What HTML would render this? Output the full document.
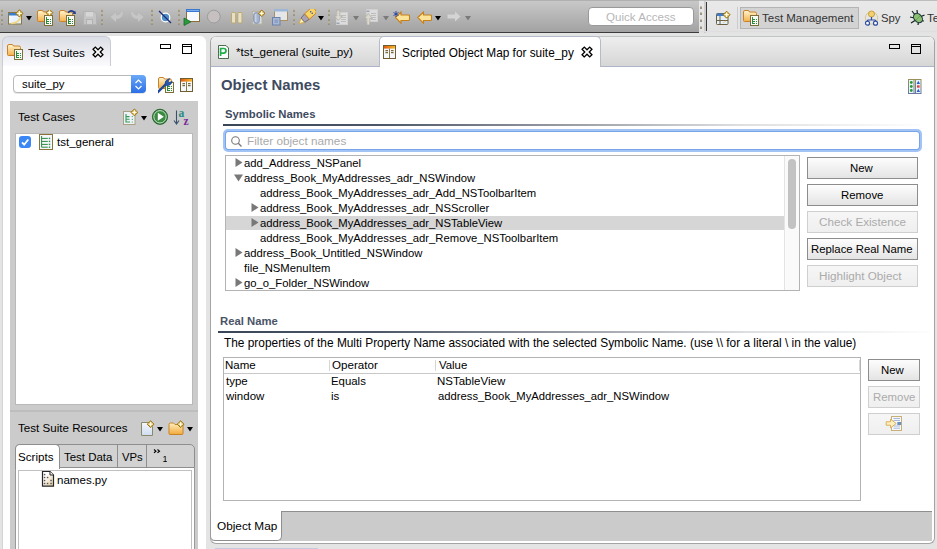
<!DOCTYPE html>
<html><head><meta charset="utf-8">
<style>
*{box-sizing:border-box;margin:0;padding:0}
html,body{width:937px;height:549px;overflow:hidden;background:#e4e4e4;font-family:"Liberation Sans",sans-serif;position:relative}
.a{position:absolute;display:block}
.t{position:absolute;white-space:nowrap;line-height:20px;font-family:"Liberation Sans",sans-serif}
</style></head><body>
<div class="a" style="left:0px;top:0px;width:699px;height:32px;background:linear-gradient(#c9c9c9,#a2a2a2);"></div>
<div class="a" style="left:0px;top:0px;width:699px;height:1px;background:#b0b0b0;"></div>
<div class="a" style="left:0px;top:32px;width:699px;height:1px;background:#3c3c3c;"></div>
<div class="a" style="left:699px;top:0px;width:238px;height:33px;background:linear-gradient(#e9e9e9,#e2e2e2);"></div>
<div class="a" style="left:699px;top:0px;width:238px;height:1px;background:#bdbdbd;"></div>
<div class="a" style="left:706px;top:2px;width:1px;height:30px;background:#383838;"></div>
<div class="a" style="left:704px;top:1px;width:2px;height:32px;background:#cdcdcd;"></div>
<div class="a" style="left:699px;top:31px;width:238px;height:1px;background:#dedede;"></div>
<div class="a" style="left:0px;top:33px;width:937px;height:516px;background:#e4e4e4;"></div>
<div class="a" style="left:1px;top:9px;width:2px;height:3px;background:linear-gradient(#c9c1a2,#857d66);border-radius:1px;"></div>
<div class="a" style="left:1px;top:13px;width:2px;height:3px;background:linear-gradient(#c9c1a2,#857d66);border-radius:1px;"></div>
<div class="a" style="left:1px;top:18px;width:2px;height:3px;background:linear-gradient(#c9c1a2,#857d66);border-radius:1px;"></div>
<div class="a" style="left:1px;top:22px;width:2px;height:3px;background:linear-gradient(#c9c1a2,#857d66);border-radius:1px;"></div>
<div class="a" style="left:101px;top:9px;width:2px;height:3px;background:linear-gradient(#c9c1a2,#857d66);border-radius:1px;"></div>
<div class="a" style="left:101px;top:13px;width:2px;height:3px;background:linear-gradient(#c9c1a2,#857d66);border-radius:1px;"></div>
<div class="a" style="left:101px;top:18px;width:2px;height:3px;background:linear-gradient(#c9c1a2,#857d66);border-radius:1px;"></div>
<div class="a" style="left:101px;top:22px;width:2px;height:3px;background:linear-gradient(#c9c1a2,#857d66);border-radius:1px;"></div>
<div class="a" style="left:151px;top:9px;width:2px;height:3px;background:linear-gradient(#c9c1a2,#857d66);border-radius:1px;"></div>
<div class="a" style="left:151px;top:13px;width:2px;height:3px;background:linear-gradient(#c9c1a2,#857d66);border-radius:1px;"></div>
<div class="a" style="left:151px;top:18px;width:2px;height:3px;background:linear-gradient(#c9c1a2,#857d66);border-radius:1px;"></div>
<div class="a" style="left:151px;top:22px;width:2px;height:3px;background:linear-gradient(#c9c1a2,#857d66);border-radius:1px;"></div>
<div class="a" style="left:178px;top:9px;width:2px;height:3px;background:linear-gradient(#c9c1a2,#857d66);border-radius:1px;"></div>
<div class="a" style="left:178px;top:13px;width:2px;height:3px;background:linear-gradient(#c9c1a2,#857d66);border-radius:1px;"></div>
<div class="a" style="left:178px;top:18px;width:2px;height:3px;background:linear-gradient(#c9c1a2,#857d66);border-radius:1px;"></div>
<div class="a" style="left:178px;top:22px;width:2px;height:3px;background:linear-gradient(#c9c1a2,#857d66);border-radius:1px;"></div>
<div class="a" style="left:293px;top:9px;width:2px;height:3px;background:linear-gradient(#c9c1a2,#857d66);border-radius:1px;"></div>
<div class="a" style="left:293px;top:13px;width:2px;height:3px;background:linear-gradient(#c9c1a2,#857d66);border-radius:1px;"></div>
<div class="a" style="left:293px;top:18px;width:2px;height:3px;background:linear-gradient(#c9c1a2,#857d66);border-radius:1px;"></div>
<div class="a" style="left:293px;top:22px;width:2px;height:3px;background:linear-gradient(#c9c1a2,#857d66);border-radius:1px;"></div>
<div class="a" style="left:328px;top:9px;width:2px;height:3px;background:linear-gradient(#c9c1a2,#857d66);border-radius:1px;"></div>
<div class="a" style="left:328px;top:13px;width:2px;height:3px;background:linear-gradient(#c9c1a2,#857d66);border-radius:1px;"></div>
<div class="a" style="left:328px;top:18px;width:2px;height:3px;background:linear-gradient(#c9c1a2,#857d66);border-radius:1px;"></div>
<div class="a" style="left:328px;top:22px;width:2px;height:3px;background:linear-gradient(#c9c1a2,#857d66);border-radius:1px;"></div>
<div class="a" style="left:700px;top:6px;width:2px;height:3px;background:linear-gradient(#c9c1a2,#6f6a58);border-radius:1px;"></div>
<div class="a" style="left:700px;top:12px;width:2px;height:3px;background:linear-gradient(#c9c1a2,#6f6a58);border-radius:1px;"></div>
<div class="a" style="left:700px;top:19px;width:2px;height:3px;background:linear-gradient(#c9c1a2,#6f6a58);border-radius:1px;"></div>
<div class="a" style="left:700px;top:26px;width:2px;height:3px;background:linear-gradient(#c9c1a2,#6f6a58);border-radius:1px;"></div>
<svg class="a" style="left:7px;top:9px" width="18" height="17" viewBox="0 0 18 17"><defs><linearGradient id="g1" x1="0" y1="0" x2="1" y2="1"><stop offset="0" stop-color="#f8fbff"/><stop offset="1" stop-color="#dcecff"/></linearGradient></defs><rect x="1.5" y="3.5" width="13" height="11.5" fill="url(#g1)" stroke="#8a7840"/><rect x="2" y="4" width="12" height="2.5" fill="#3a7ed2"/><path d="M4 14.5 Q12 14 13.5 8" stroke="#f2d47a" stroke-width="1.6" fill="none"/><path d="M12.4 0.8000000000000003 L16.0 4.4 L12.4 8.0 L8.8 4.4Z" fill="#d8b040" stroke="#9a7418" stroke-width="1"/><path d="M12.4 2.1000000000000005V6.7M10.100000000000001 4.4H14.7" stroke="#fffbe8" stroke-width="1.3" fill="none"/></svg>
<svg class="a" style="left:26px;top:16px" width="6" height="5" viewBox="0 0 6 5"><path d="M0 0H6L3 4.5Z" fill="#000"/></svg>
<svg class="a" style="left:37px;top:10px" width="18" height="18" viewBox="0 0 18 18"><defs><linearGradient id="g2" x1="0" y1="0" x2="0" y2="1"><stop offset="0" stop-color="#fff6d0"/><stop offset="1" stop-color="#f4b048"/></linearGradient></defs><path d="M0.5 2 Q0.5 0.5 2 0.5 H5 Q6 0.5 6.5 2 H12 Q13.5 2 13.5 3.5 V10.5 Q13.5 11.5 12.5 11.5 H1.5 Q0.5 11.5 0.5 10.5Z" fill="url(#g2)" stroke="#c8822a"/><rect x="7.5" y="5.5" width="8" height="10" fill="#fafaf4" stroke="#7e6e38"/><path d="M9.5 7V14M9 9.5H12M9 11.5H12M9 13.5H12" stroke="#2a8a40" stroke-width="1" fill="none"/><rect x="13" y="9" width="1" height="1" fill="#2a8a40"/><rect x="13" y="11" width="1" height="1" fill="#2a8a40"/><rect x="13" y="13" width="1" height="1" fill="#2a8a40"/><path d="M12.5 -0.6999999999999997 L15.9 2.7 L12.5 6.1 L9.1 2.7Z" fill="#d8b040" stroke="#9a7418" stroke-width="1"/><path d="M12.5 0.6000000000000003V4.8M10.4 2.7H14.6" stroke="#fffbe8" stroke-width="1.3" fill="none"/></svg>
<svg class="a" style="left:59px;top:10px" width="18" height="18" viewBox="0 0 18 18"><defs><linearGradient id="g3" x1="0" y1="0" x2="0" y2="1"><stop offset="0" stop-color="#fff6d0"/><stop offset="1" stop-color="#f4b048"/></linearGradient></defs><path d="M0.5 2 Q0.5 0.5 2 0.5 H5 Q6 0.5 6.5 2 H12 Q13.5 2 13.5 3.5 V10.5 Q13.5 11.5 12.5 11.5 H1.5 Q0.5 11.5 0.5 10.5Z" fill="url(#g3)" stroke="#c8822a"/><rect x="7.5" y="5.5" width="8" height="10" fill="#fafaf4" stroke="#7e6e38"/><path d="M9.5 7V14M9 9.5H12M9 11.5H12M9 13.5H12" stroke="#2a8a40" stroke-width="1" fill="none"/><rect x="13" y="9" width="1" height="1" fill="#2a8a40"/><rect x="13" y="11" width="1" height="1" fill="#2a8a40"/><rect x="13" y="13" width="1" height="1" fill="#2a8a40"/><path d="M9 2.8 Q12 -0.8 15.3 2.2" stroke="#1f3a8a" stroke-width="1.6" fill="none"/><path d="M17 4 L13.2 3.8 L16.2 0.8Z" fill="#1f3a8a"/></svg>
<svg class="a" style="left:83px;top:11px" width="14" height="14" viewBox="0 0 14 14"><path d="M0.5 0.5H11L13.5 3V13.5H0.5Z" fill="#c4c4c4" stroke="#b2b2b2"/><rect x="3" y="1" width="7" height="4.5" fill="#d6d6d6"/><rect x="3.5" y="8.5" width="6" height="5" fill="#d0d0d0" stroke="#b2b2b2"/></svg>
<svg class="a" style="left:110px;top:11px" width="14" height="12" viewBox="0 0 14 12"><path d="M13 1 Q13 8 6 8 V11 L0.5 6 L6 1.5 V4.5 Q10 4.5 11 1Z" fill="#c6c6c6"/></svg>
<svg class="a" style="left:130px;top:11px" width="14" height="12" viewBox="0 0 14 12"><path d="M1 1 Q1 8 8 8 V11 L13.5 6 L8 1.5 V4.5 Q4 4.5 3 1Z" fill="#c6c6c6"/></svg>
<svg class="a" style="left:158px;top:10px" width="14" height="14" viewBox="0 0 14 14"><circle cx="7.5" cy="7.5" r="4.3" fill="#4f8fc8" stroke="#fff" stroke-width="1.2"/><path d="M1 1 L13 13" stroke="#1a2c7a" stroke-width="1.2" fill="none"/></svg>
<svg class="a" style="left:183px;top:9px" width="18" height="17" viewBox="0 0 18 17"><rect x="3.5" y="1" width="13" height="11.5" fill="#f6faff" stroke="#8a7030"/><rect x="3" y="0" width="14" height="3" fill="#3a78d0"/><rect x="4" y="1" width="12" height="0.8" fill="#8ab8ee"/><path d="M1 9 L8 12.8 L1 16.5Z" fill="#2a9a3a" stroke="#1a6a28" stroke-width="0.8"/></svg>
<svg class="a" style="left:206px;top:9px" width="16" height="16" viewBox="0 0 16 16"><circle cx="7.8" cy="7.6" r="6.4" fill="#c6c0c0" stroke="#9c9c9c"/></svg>
<svg class="a" style="left:230px;top:11px" width="13" height="13" viewBox="0 0 13 13"><rect x="1.5" y="1.5" width="4.2" height="10.5" fill="#e6e0c8" stroke="#bea86a" rx="1"/><rect x="7.8" y="1.5" width="4.2" height="10.5" fill="#e6e0c8" stroke="#bea86a" rx="1"/></svg>
<svg class="a" style="left:251px;top:9px" width="16" height="16" viewBox="0 0 16 16"><rect x="1.5" y="2.5" width="9.5" height="12.5" fill="#d8dce4" stroke="#b8b4a0"/><rect x="2.5" y="3.5" width="6" height="11" rx="3" fill="#a4b2cc" stroke="#8090b0" stroke-width="0.8"/><rect x="4" y="5" width="1.5" height="8" fill="#c8d2e4"/><path d="M10.7 1.0 L14.0 4.3 L10.7 7.6 L7.3999999999999995 4.3Z" fill="#d8b040" stroke="#9a7418" stroke-width="1"/><path d="M10.7 2.3V6.3M8.7 4.3H12.7" stroke="#fffbe8" stroke-width="1.3" fill="none"/></svg>
<svg class="a" style="left:271px;top:9px" width="18" height="17" viewBox="0 0 18 17"><rect x="3.5" y="1" width="13" height="10.5" fill="#e4e6ea" stroke="#a89060"/><rect x="3" y="0" width="14" height="2.5" fill="#9cb6d8"/><rect x="1.5" y="8.5" width="7.5" height="7.5" fill="#a8b8d4" stroke="#6c82aa"/><rect x="3.5" y="10.5" width="3.5" height="3.5" fill="#8ea0c4"/></svg>
<svg class="a" style="left:298px;top:9px" width="18" height="16" viewBox="0 0 18 16"><g transform="translate(9 7.5) rotate(-42)"><path d="M-10.5 0 L-5.5 -2.8 L-5.5 2.8Z" fill="#fff6c0" stroke="#d8a838" stroke-width="0.8"/><path d="M-5.5 -2.8 L0 -3.6 L0 3.6 L-5.5 2.8Z" fill="#a8a2b2" stroke="#6a6270" stroke-width="0.8"/><path d="M0 -3.6 H8 Q10.8 -3.6 10.8 0 Q10.8 3.6 8 3.6 H0Z" fill="#f6d466" stroke="#d08224" stroke-width="0.9"/><circle cx="6" cy="-1.1" r="0.7" fill="#2848a8"/><circle cx="6" cy="1.1" r="0.7" fill="#2848a8"/></g></svg>
<svg class="a" style="left:318px;top:16px" width="6" height="5" viewBox="0 0 6 5"><path d="M0 0H6L3 4.5Z" fill="#000"/></svg>
<svg class="a" style="left:334px;top:9px" width="15" height="17" viewBox="0 0 15 17"><rect x="2.5" y="3.5" width="11" height="12" fill="#dcdcdc" stroke="#d0d0d0"/><path d="M7 6.5H12M7 8.5H12M7 10.5H12M7 12.5H12" stroke="#bdbdbd" fill="none"/><rect x="2.5" y="13.5" width="3" height="1.5" fill="#9aa4b4"/><path d="M2.8 1 H5.8 V7 H8.3 L4.3 11.5 L0.3 7 H2.8Z" fill="#dad8d0" stroke="#aaa89c" stroke-width="0.7"/></svg>
<svg class="a" style="left:353px;top:16px" width="6" height="5" viewBox="0 0 6 5"><path d="M0 0H6L3 4.5Z" fill="#7a7a7a"/></svg>
<svg class="a" style="left:364px;top:9px" width="15" height="17" viewBox="0 0 15 17"><rect x="2.5" y="0.5" width="11" height="12" fill="#dcdcdc" stroke="#d0d0d0"/><path d="M7 4.5H12M7 6.5H12M7 8.5H12M7 10.5H12" stroke="#bdbdbd" fill="none"/><rect x="2.5" y="1.5" width="3" height="1.5" fill="#9aa4b4"/><path d="M2.8 16 H5.8 V9.5 H8.3 L4.3 4.5 L0.3 9.5 H2.8Z" fill="#dad8d0" stroke="#aaa89c" stroke-width="0.7"/></svg>
<svg class="a" style="left:383px;top:16px" width="6" height="5" viewBox="0 0 6 5"><path d="M0 0H6L3 4.5Z" fill="#7a7a7a"/></svg>
<svg class="a" style="left:393px;top:11px" width="17" height="13" viewBox="0 0 17 13"><path d="M2.5 6.5 L8 1 V4 H15.5 Q16.5 4 16.5 5 V8.5 Q16.5 9.5 15.5 9.5 H8 V12.2Z" fill="#fbe49a" stroke="#c8801a" stroke-width="1.1"/><path d="M3 0 V6M0.5 1.5 L5.5 4.5M0.5 4.5 L5.5 1.5" stroke="#1f3f9f" stroke-width="0.9" fill="none"/></svg>
<svg class="a" style="left:417px;top:11px" width="15" height="13" viewBox="0 0 15 13"><path d="M0.8 6.5 L6.5 1 V4 H13.5 Q14.5 4 14.5 5 V8.5 Q14.5 9.5 13.5 9.5 H6.5 V12.2Z" fill="#fbe49a" stroke="#c8801a" stroke-width="1.1"/></svg>
<svg class="a" style="left:435px;top:16px" width="6" height="5" viewBox="0 0 6 5"><path d="M0 0H6L3 4.5Z" fill="#000"/></svg>
<svg class="a" style="left:447px;top:11px" width="14" height="12" viewBox="0 0 14 12"><path d="M13.5 5.5 L8 0.5 V3.5 H0.5 V7.5 H8 V10.5Z" fill="#d4d4d4"/></svg>
<svg class="a" style="left:465px;top:16px" width="6" height="5" viewBox="0 0 6 5"><path d="M0 0H6L3 4.5Z" fill="#7a7a7a"/></svg>
<div class="a" style="left:588px;top:7px;width:106px;height:19px;background:#fff;border:1px solid #999;border-radius:4px;"></div>
<svg class="a" style="left:715px;top:10px" width="16" height="16" viewBox="0 0 16 16"><rect x="1.5" y="3.5" width="11.5" height="11" rx="0.8" fill="#e2f0fc" stroke="#6e6040"/><rect x="2" y="3.5" width="10.5" height="2.5" fill="#3b7bd0"/><path d="M5 6V14.5M1.5 10.5H13" stroke="#6e6040" fill="none"/><path d="M8 13 L11 11" stroke="#e8c870" stroke-width="0.8"/><path d="M11.6 1.2000000000000002 L15.1 4.7 L11.6 8.2 L8.1 4.7Z" fill="#d8b040" stroke="#9a7418" stroke-width="1"/><path d="M11.6 2.5V6.8999999999999995M9.4 4.7H13.799999999999999" stroke="#fffbe8" stroke-width="1.3" fill="none"/></svg>
<div class="a" style="left:737px;top:7px;width:1px;height:22px;background:#cbcbcb;"></div>
<div class="a" style="left:740px;top:7px;width:119px;height:22px;background:#d3d3d3;border:1px solid #b4b4b4;"></div>
<svg class="a" style="left:743px;top:10px" width="18" height="18" viewBox="0 0 18 18"><defs><linearGradient id="g4" x1="0" y1="0" x2="0" y2="1"><stop offset="0" stop-color="#fff6d0"/><stop offset="1" stop-color="#f4b048"/></linearGradient></defs><path d="M0.5 2 Q0.5 0.5 2 0.5 H5 Q6 0.5 6.5 2 H12 Q13.5 2 13.5 3.5 V10.5 Q13.5 11.5 12.5 11.5 H1.5 Q0.5 11.5 0.5 10.5Z" fill="url(#g4)" stroke="#c8822a"/><rect x="7.5" y="5.5" width="8" height="10" fill="#fafaf4" stroke="#7e6e38"/><path d="M9.5 7V14M9 9.5H12M9 11.5H12M9 13.5H12" stroke="#2a8a40" stroke-width="1" fill="none"/><rect x="13" y="9" width="1" height="1" fill="#2a8a40"/><rect x="13" y="11" width="1" height="1" fill="#2a8a40"/><rect x="13" y="13" width="1" height="1" fill="#2a8a40"/></svg>
<svg class="a" style="left:864px;top:10px" width="15" height="16" viewBox="0 0 15 16"><circle cx="7.5" cy="8" r="6.2" fill="none" stroke="#d8c890" stroke-width="1"/><circle cx="7.5" cy="4" r="3" fill="#f3d070" stroke="#c8a040"/><path d="M7.5 7V10M3.5 10H11.5M3.5 10V12M11.5 10V12" stroke="#2f4fa0" stroke-width="1.2" fill="none"/><circle cx="3.5" cy="13.2" r="2" fill="#fff" stroke="#2f4fa0" stroke-width="1.2"/><circle cx="11.5" cy="13.2" r="2" fill="#fff" stroke="#2f4fa0" stroke-width="1.2"/></svg>
<svg class="a" style="left:909px;top:9px" width="17" height="17" viewBox="0 0 17 17"><path d="M3 2 L6.5 6.5 M1 8 L5.5 9 M2 14 L6 11.5 M8 1 L8.5 5.5 M15.5 6 L11 8 M15 12 L11 11.5 M9 16 L9.5 12.5" stroke="#10201a" stroke-width="1.2" fill="none"/><ellipse cx="9" cy="9" rx="3.8" ry="5.2" transform="rotate(-40 9 9)" fill="#8cc070" stroke="#1e3a40" stroke-width="1.1"/><path d="M7 11 L11 7" stroke="#5a9a50" stroke-width="0.8"/></svg>
<div class="a" style="left:2px;top:36px;width:204px;height:513px;background:#fff;border-left:1px solid #d4d4d4;border-radius:6px 6px 0 0;"></div>
<div class="a" style="left:2px;top:36px;width:109px;height:30px;background:linear-gradient(#dcdee6,#fbfbfd);border:1px solid #c9ccd6;border-bottom:none;border-radius:6px 6px 0 0;"></div>
<svg class="a" style="left:7px;top:44px" width="18" height="18" viewBox="0 0 18 18"><defs><linearGradient id="g5" x1="0" y1="0" x2="0" y2="1"><stop offset="0" stop-color="#fff6d0"/><stop offset="1" stop-color="#f4b048"/></linearGradient></defs><path d="M0.5 2 Q0.5 0.5 2 0.5 H5 Q6 0.5 6.5 2 H12 Q13.5 2 13.5 3.5 V10.5 Q13.5 11.5 12.5 11.5 H1.5 Q0.5 11.5 0.5 10.5Z" fill="url(#g5)" stroke="#c8822a"/><rect x="7.5" y="5.5" width="8" height="10" fill="#fafaf4" stroke="#7e6e38"/><path d="M9.5 7V14M9 9.5H12M9 11.5H12M9 13.5H12" stroke="#2a8a40" stroke-width="1" fill="none"/><rect x="13" y="9" width="1" height="1" fill="#2a8a40"/><rect x="13" y="11" width="1" height="1" fill="#2a8a40"/><rect x="13" y="13" width="1" height="1" fill="#2a8a40"/></svg>
<svg class="a" style="left:92px;top:46px" width="12" height="12" viewBox="0 0 12 12"><path d="M3.31 10.95 L1.05 8.69 L3.74 6.00 L1.05 3.31 L3.31 1.05 L6.00 3.74 L8.69 1.05 L10.95 3.31 L8.26 6.00 L10.95 8.69 L8.69 10.95 L6.00 8.26Z" fill="#fff" stroke="#000" stroke-width="1.3" stroke-linejoin="miter"/></svg>
<div class="a" style="left:160px;top:44px;width:11px;height:5px;border:1.3px solid #000;"></div>
<div class="a" style="left:182px;top:44px;width:10px;height:10px;border:1.3px solid #000;"></div>
<div class="a" style="left:183px;top:46px;width:8px;height:1px;background:#000;"></div>
<div class="a" style="left:13px;top:75px;width:133px;height:18px;background:#fff;border:1px solid #b8b8b8;border-radius:4px;box-shadow:0 1px 0 #e6e6e6;"></div>
<div class="a" style="left:131px;top:75px;width:15px;height:18px;background:linear-gradient(#6aa9f8,#2c6fe6);border-radius:0 4px 4px 0;"></div>
<svg class="a" style="left:134px;top:78px" width="9" height="13" viewBox="0 0 9 13"><path d="M1.5 5 L4.5 2 L7.5 5 M1.5 8 L4.5 11 L7.5 8" stroke="#fff" stroke-width="1.2" fill="none"/></svg>
<svg class="a" style="left:158px;top:77px" width="18" height="18" viewBox="0 0 18 18"><defs><linearGradient id="g6" x1="0" y1="0" x2="0" y2="1"><stop offset="0" stop-color="#fff6d0"/><stop offset="1" stop-color="#f4b048"/></linearGradient></defs><path d="M0.5 2 Q0.5 0.5 2 0.5 H5 Q6 0.5 6.5 2 H12 Q13.5 2 13.5 3.5 V10.5 Q13.5 11.5 12.5 11.5 H1.5 Q0.5 11.5 0.5 10.5Z" fill="url(#g6)" stroke="#c8822a"/><rect x="7.5" y="5.5" width="8" height="10" fill="#fafaf4" stroke="#7e6e38"/><path d="M9.5 7V14M9 9.5H12M9 11.5H12M9 13.5H12" stroke="#2a8a40" stroke-width="1" fill="none"/><rect x="13" y="9" width="1" height="1" fill="#2a8a40"/><rect x="13" y="11" width="1" height="1" fill="#2a8a40"/><rect x="13" y="13" width="1" height="1" fill="#2a8a40"/><path d="M-0.2 15.2 L8.5 6.5" stroke="#1f4a9a" stroke-width="2.4" stroke-linecap="round" fill="none"/><path d="M7 8 Q6.5 3.5 10 2.2 L11.8 1.6 L10.2 4.2 L11.5 5.5 L14.2 4.2 Q13.8 8 9.5 8.8Z" fill="#2a5ab0" stroke="#1a3a80" stroke-width="0.6"/></svg>
<svg class="a" style="left:180px;top:78px" width="14" height="15" viewBox="0 0 14 15"><defs><linearGradient id="tg2" x1="0" x2="1"><stop offset="0" stop-color="#e05a10"/><stop offset="1" stop-color="#f8b828"/></linearGradient></defs><rect x="0.5" y="0.5" width="12" height="13" fill="#f4f8fc" stroke="#6e5e30"/><rect x="1" y="1" width="11" height="2.6" fill="url(#tg2)"/><path d="M6.5 3.6V13.2" stroke="#8a7a40" fill="none"/><path d="M2.4 5.6H5M2.4 7.6H5M8 5.6H10.6M8 7.6H10.6" stroke="#7a6a40" stroke-width="1.1" fill="none"/></svg>
<div class="a" style="left:10px;top:101px;width:188px;height:309px;background:#cbcbcb;"></div>
<svg class="a" style="left:122px;top:108px" width="16" height="18" viewBox="0 0 16 18"><rect x="1.5" y="3.5" width="11.5" height="13" fill="#eef2f6" stroke="#a8a080"/><path d="M4 6V14H8M4 8.6H7.5M4 11.3H7.5" stroke="#2f9a5a" stroke-width="1.1" fill="none"/><circle cx="10.3" cy="8.6" r="0.6" fill="#2f9a5a"/><circle cx="10.3" cy="11.3" r="0.6" fill="#2f9a5a"/><circle cx="10.3" cy="14" r="0.6" fill="#2f9a5a"/><path d="M12.4 1.0000000000000004 L15.8 4.4 L12.4 7.800000000000001 L9.0 4.4Z" fill="#d8b040" stroke="#9a7418" stroke-width="1"/><path d="M12.4 2.3000000000000007V6.500000000000001M10.3 4.4H14.5" stroke="#fffbe8" stroke-width="1.3" fill="none"/></svg>
<svg class="a" style="left:141px;top:116px" width="6" height="5" viewBox="0 0 6 5"><path d="M0 0H6L3 4.5Z" fill="#000"/></svg>
<svg class="a" style="left:151px;top:108px" width="18" height="18" viewBox="0 0 18 18"><circle cx="9" cy="8.8" r="7.6" fill="#2c7a34" stroke="#1e5a24" stroke-width="0.8"/><circle cx="9" cy="8.8" r="6.2" fill="#3a8a40" stroke="#d8ecd8" stroke-width="0.9"/><path d="M6.8 4.8 L12.8 8.8 L6.8 12.8Z" fill="#fff"/></svg>
<svg class="a" style="left:173px;top:108px" width="18" height="18" viewBox="0 0 18 18"><path d="M3.5 2.5V15M1 12.5 L3.5 16 L6 12.5" stroke="#3a5070" stroke-width="1.1" fill="none"/><text x="5.5" y="9" font-family="Liberation Serif" font-weight="bold" font-size="11.5" fill="#2a8a80">a</text><text x="10.5" y="17" font-family="Liberation Serif" font-weight="bold" font-size="11.5" fill="#7a2a9a">z</text></svg>
<div class="a" style="left:15px;top:133px;width:178px;height:272px;background:#fff;border:1px solid #b9b9b9;"></div>
<div class="a" style="left:19px;top:136px;width:12px;height:12px;background:#3b86f7;border-radius:3px;"></div>
<svg class="a" style="left:19px;top:136px" width="12" height="12" viewBox="0 0 12 12"><path d="M3 6.3 L5.2 8.6 L9.3 3.5" stroke="#fff" stroke-width="1.8" fill="none"/></svg>
<svg class="a" style="left:39px;top:134px" width="14" height="16" viewBox="0 0 14 16"><rect x="0.5" y="0.5" width="13" height="15" fill="#f4f7fb" stroke="#8a7238"/><path d="M2.6 2V13.2M2.6 4.4H8.8M2.6 7.4H8.8M2.6 10.4H8.8M2.6 13.2H8.8" stroke="#2a8a40" stroke-width="1" fill="none"/><rect x="9.8" y="3.7" width="1.4" height="1.4" fill="#2a8a40"/><rect x="9.8" y="6.7" width="1.4" height="1.4" fill="#2a8a40"/><rect x="9.8" y="9.700000000000001" width="1.4" height="1.4" fill="#2a8a40"/><rect x="9.8" y="12.5" width="1.4" height="1.4" fill="#2a8a40"/></svg>
<div class="a" style="left:10px;top:410px;width:188px;height:2px;background:#bdbdbd;"></div>
<div class="a" style="left:10px;top:412px;width:188px;height:137px;background:#cbcbcb;"></div>
<svg class="a" style="left:140px;top:420px" width="16" height="17" viewBox="0 0 16 17"><defs><linearGradient id="nf" x1="0" y1="0" x2="0" y2="1"><stop offset="0" stop-color="#f4f8fe"/><stop offset="1" stop-color="#cfdcf0"/></linearGradient></defs><path d="M1.5 2.5 H8.5 L12.5 6.5 V15.5 H1.5Z" fill="url(#nf)" stroke="#8a8a6a"/><path d="M10.6 0.8000000000000003 L14.0 4.2 L10.6 7.6 L7.199999999999999 4.2Z" fill="#d8b040" stroke="#9a7418" stroke-width="1"/><path d="M10.6 2.1000000000000005V6.3M8.5 4.2H12.7" stroke="#fffbe8" stroke-width="1.3" fill="none"/></svg>
<svg class="a" style="left:157px;top:427px" width="6" height="5" viewBox="0 0 6 5"><path d="M0 0H6L3 4.5Z" fill="#000"/></svg>
<svg class="a" style="left:168px;top:420px" width="17" height="16" viewBox="0 0 17 16"><defs><linearGradient id="nfd" x1="0" y1="0" x2="0" y2="1"><stop offset="0" stop-color="#fff0c0"/><stop offset="1" stop-color="#f2a838"/></linearGradient></defs><path d="M1 4.5 Q1 3 2.5 3 H5.5 L7 4.5 H14 Q15 4.5 15 5.5 V13.5 Q15 14.5 14 14.5 H2 Q1 14.5 1 13.5Z" fill="url(#nfd)" stroke="#c8822a"/><path d="M12.6 0.8000000000000003 L16.0 4.2 L12.6 7.6 L9.2 4.2Z" fill="#d8b040" stroke="#9a7418" stroke-width="1"/><path d="M12.6 2.1000000000000005V6.3M10.5 4.2H14.7" stroke="#fffbe8" stroke-width="1.3" fill="none"/></svg>
<svg class="a" style="left:187px;top:427px" width="6" height="5" viewBox="0 0 6 5"><path d="M0 0H6L3 4.5Z" fill="#000"/></svg>
<div class="a" style="left:15px;top:444px;width:180px;height:24px;background:#d2d2d2;border:1px solid #8e8e8e;border-radius:5px 5px 0 0;"></div>
<div class="a" style="left:117px;top:445px;width:1px;height:23px;background:#8e8e8e;"></div>
<div class="a" style="left:146px;top:445px;width:1px;height:23px;background:#8e8e8e;"></div>
<div class="a" style="left:15px;top:468px;width:180px;height:81px;background:#fff;border-left:1px solid #9a9a9a;border-right:1px solid #9a9a9a;"></div>
<div class="a" style="left:15px;top:444px;width:45px;height:25px;background:#fff;border:1px solid #8e8e8e;border-bottom:none;border-radius:5px 5px 0 0;"></div>
<svg class="a" style="left:153px;top:449px" width="14" height="13" viewBox="0 0 14 13"><path d="M1 0.5 L3 2.2 L1 3.8 M4.5 0.5 L6.5 2.2 L4.5 3.8" stroke="#000" stroke-width="1.1" fill="none"/><text x="9.5" y="12.5" font-family="Liberation Sans" font-size="9" fill="#000">1</text></svg>
<div class="a" style="left:18px;top:470px;width:174px;height:79px;background:#fff;border:1px solid #c0c0c0;border-bottom:none;"></div>
<svg class="a" style="left:41px;top:470px" width="15" height="18" viewBox="0 0 15 18"><defs><linearGradient id="np" x1="0" y1="0" x2="1" y2="1"><stop offset="0.3" stop-color="#ffffff"/><stop offset="1" stop-color="#e2c89a"/></linearGradient></defs><path d="M1.5 1.5 H9 L12.5 5 V16.2 H1.5Z" fill="url(#np)" stroke="#262626" stroke-width="1.2"/><path d="M9 1.5 V5 H12.5" fill="#fff" stroke="#262626" stroke-width="1"/><rect x="2.8" y="3.8999999999999995" width="1.5" height="1.4" fill="#555"/><rect x="2.8" y="6.8" width="1.5" height="1.4" fill="#555"/><rect x="5.8" y="6.8" width="1.5" height="1.4" fill="#555"/><rect x="2.8" y="9.8" width="1.5" height="1.4" fill="#555"/><rect x="9.3" y="9.8" width="1.5" height="1.4" fill="#555"/><rect x="2.8" y="12.8" width="1.5" height="1.4" fill="#555"/><rect x="5.8" y="12.8" width="1.5" height="1.4" fill="#555"/><rect x="9.3" y="12.8" width="1.5" height="1.4" fill="#555"/></svg>
<div class="a" style="left:210px;top:36px;width:725px;height:508px;background:#fff;border:1px solid #a4a4a4;border-top-color:#c2c6c2;border-radius:6px;"></div>
<div class="a" style="left:211px;top:37px;width:723px;height:29px;background:linear-gradient(#eeeeee,#d6d6d6);border-radius:5px 5px 0 0;"></div>
<div class="a" style="left:211px;top:66px;width:723px;height:1px;background:#aeb4c8;"></div>
<svg class="a" style="left:218px;top:45px" width="12" height="14" viewBox="0 0 12 14"><path d="M0.5 0.5 H8 L10.5 3 V13.5 H0.5Z" fill="#fbfbff" stroke="#4f6a30" stroke-width="1"/><path d="M0.5 0.5 H8 L10.5 3 V13.5 H0.5Z" fill="none" stroke="#4a7ac0" stroke-width="1" stroke-dasharray="0.6 2.4"/><path d="M2.6 11 V3.5 H5.6 Q8 3.5 8 5.8 Q8 8.1 5.6 8.1 H2.6" fill="none" stroke="#1fae48" stroke-width="1.7"/></svg>
<div class="a" style="left:379px;top:36px;width:222px;height:31px;background:#fff;border:1px solid #b4bccc;border-bottom:none;border-radius:5px 5px 0 0;"></div>
<svg class="a" style="left:383px;top:45px" width="14" height="14" viewBox="0 0 14 14"><defs><linearGradient id="tg1" x1="0" x2="1"><stop offset="0" stop-color="#e05a10"/><stop offset="1" stop-color="#f8b828"/></linearGradient></defs><rect x="0.5" y="0.5" width="12" height="13" fill="#f4f8fc" stroke="#6e5e30"/><rect x="1" y="1" width="11" height="2.6" fill="url(#tg1)"/><path d="M6.5 3.6V13.2" stroke="#8a7a40" fill="none"/><path d="M2.4 5.6H5M2.4 7.6H5M8 5.6H10.6M8 7.6H10.6" stroke="#7a6a40" stroke-width="1.1" fill="none"/></svg>
<svg class="a" style="left:581px;top:46px" width="12" height="12" viewBox="0 0 12 12"><path d="M3.31 10.95 L1.05 8.69 L3.74 6.00 L1.05 3.31 L3.31 1.05 L6.00 3.74 L8.69 1.05 L10.95 3.31 L8.26 6.00 L10.95 8.69 L8.69 10.95 L6.00 8.26Z" fill="#fff" stroke="#000" stroke-width="1.3" stroke-linejoin="miter"/></svg>
<div class="a" style="left:889px;top:44px;width:11px;height:5px;border:1.3px solid #000;"></div>
<div class="a" style="left:911px;top:44px;width:10px;height:10px;border:1.3px solid #000;"></div>
<div class="a" style="left:912px;top:46px;width:8px;height:1px;background:#000;"></div>
<svg class="a" style="left:908px;top:79px" width="14" height="15" viewBox="0 0 14 15"><defs><linearGradient id="on" x1="0" y1="0" x2="0" y2="1"><stop offset="0" stop-color="#9a9058"/><stop offset="1" stop-color="#6a78a0"/></linearGradient></defs><rect x="0.5" y="0.5" width="12.5" height="14" fill="#e8f6fc" stroke="url(#on)"/><path d="M6 0.5V14.5M7.5 0.5V14.5" stroke="url(#on)" fill="none"/><circle cx="3.3" cy="3.5" r="1.4" fill="#2a9a3a"/><circle cx="3.3" cy="7.5" r="1.4" fill="#2a9a3a"/><circle cx="3.3" cy="11.5" r="1.4" fill="#2a9a3a"/><path d="M10.3 1.8 L12 5 H8.6Z" fill="#2a5ad0"/><rect x="9" y="6.3" width="2.6" height="2.4" fill="#e04040"/><path d="M10.3 9.8 L12 13 H8.6Z" fill="#2a5ad0"/></svg>
<div class="a" style="left:223px;top:124px;width:697px;height:2px;background:linear-gradient(90deg,#3a4658 0%,#4c5666 22%,#9a9ea6 50%,#dcdee0 74%,#fdfdfd 100%);"></div>
<div class="a" style="left:223px;top:129px;width:699px;height:23px;border:3px solid #a2c3f5;border-radius:5px;background:#fff;"></div>
<div class="a" style="left:225px;top:131px;width:695px;height:19px;border:1px solid #78a4e8;border-radius:3px;"></div>
<svg class="a" style="left:231px;top:136px" width="12" height="11" viewBox="0 0 12 11"><circle cx="4.5" cy="4.5" r="3.8" fill="none" stroke="#777" stroke-width="1.1"/><path d="M7.3 7.3 L10.5 10.5" stroke="#777" stroke-width="1.3" fill="none"/></svg>
<div class="a" style="left:225px;top:155px;width:575px;height:136px;background:#fff;border:1px solid #b3b3b3;"></div>
<div class="a" style="left:784px;top:156px;width:1px;height:134px;background:#e4e4e4;"></div>
<div class="a" style="left:785px;top:156px;width:14px;height:134px;background:#fafafa;"></div>
<div class="a" style="left:788px;top:159px;width:8px;height:70px;background:#c2c2c2;border-radius:4px;"></div>
<div class="a" style="left:226px;top:216px;width:558px;height:14px;background:#d6d6d6;"></div>
<svg class="a" style="left:235px;top:158px" width="8" height="9" viewBox="0 0 8 9"><path d="M0.5 0 L7.5 4.5 L0.5 9Z" fill="#787878"/></svg>
<svg class="a" style="left:234px;top:174px" width="9" height="8" viewBox="0 0 9 8"><path d="M0 0.5 H9 L4.5 7.5Z" fill="#787878"/></svg>
<svg class="a" style="left:251px;top:203px" width="8" height="9" viewBox="0 0 8 9"><path d="M0.5 0 L7.5 4.5 L0.5 9Z" fill="#787878"/></svg>
<svg class="a" style="left:251px;top:218px" width="8" height="9" viewBox="0 0 8 9"><path d="M0.5 0 L7.5 4.5 L0.5 9Z" fill="#787878"/></svg>
<svg class="a" style="left:235px;top:248px" width="8" height="9" viewBox="0 0 8 9"><path d="M0.5 0 L7.5 4.5 L0.5 9Z" fill="#787878"/></svg>
<svg class="a" style="left:235px;top:278px" width="8" height="9" viewBox="0 0 8 9"><path d="M0.5 0 L7.5 4.5 L0.5 9Z" fill="#787878"/></svg>
<div class="a" style="left:807px;top:157px;width:111px;height:22px;background:linear-gradient(#fdfdfd,#e4e4e4);border:1px solid #8d8d8d;"></div>
<div class="a" style="left:807px;top:184px;width:111px;height:22px;background:linear-gradient(#fdfdfd,#e4e4e4);border:1px solid #8d8d8d;"></div>
<div class="a" style="left:807px;top:211px;width:111px;height:22px;background:linear-gradient(#f6f6f6,#efefef);border:1px solid #cfcfcf;"></div>
<div class="a" style="left:807px;top:238px;width:111px;height:22px;background:linear-gradient(#fdfdfd,#e4e4e4);border:1px solid #8d8d8d;"></div>
<div class="a" style="left:807px;top:265px;width:111px;height:22px;background:linear-gradient(#f6f6f6,#efefef);border:1px solid #cfcfcf;"></div>
<div class="a" style="left:218px;top:331px;width:712px;height:2px;background:linear-gradient(90deg,#3a4658 0%,#4c5666 22%,#9a9ea6 50%,#dcdee0 74%,#fdfdfd 100%);"></div>
<div class="a" style="left:223px;top:357px;width:638px;height:144px;background:#fff;border:1px solid #b3b3b3;"></div>
<div class="a" style="left:224px;top:373px;width:636px;height:1px;background:#c8c8c8;"></div>
<div class="a" style="left:329px;top:360px;width:1px;height:11px;background:#d6d6d6;"></div>
<div class="a" style="left:435px;top:360px;width:1px;height:11px;background:#d6d6d6;"></div>
<div class="a" style="left:859px;top:360px;width:1px;height:11px;background:#d6d6d6;"></div>
<div class="a" style="left:868px;top:359px;width:52px;height:22px;background:linear-gradient(#fdfdfd,#e4e4e4);border:1px solid #8d8d8d;"></div>
<div class="a" style="left:868px;top:386px;width:52px;height:22px;background:linear-gradient(#f6f6f6,#efefef);border:1px solid #cfcfcf;"></div>
<div class="a" style="left:868px;top:413px;width:52px;height:22px;background:linear-gradient(#f6f6f6,#efefef);border:1px solid #cfcfcf;"></div>
<svg class="a" style="left:885px;top:415px" width="18" height="17" viewBox="0 0 18 17"><rect x="6.5" y="1.5" width="10" height="14" fill="#f4f8fc" stroke="#c8b078"/><path d="M8.5 3.5H15M8.5 5.5H15M8.5 11H15M8.5 13.2H15" stroke="#a8b8d8" fill="none"/><rect x="12.3" y="7" width="3.8" height="3" fill="#6a90c0"/><path d="M1.2 6.8 H5.5 V4.2 L11.2 8.5 L5.5 12.8 V10.2 H1.2Z" fill="#fcf0c0" stroke="#d8a850" stroke-width="0.9"/></svg>
<div class="a" style="left:211px;top:511px;width:721px;height:30px;background:#cbcbcb;border-top:1px solid #8e8e8e;"></div>
<div class="a" style="left:210px;top:511px;width:72px;height:30px;background:#fff;border-left:1px solid #9c9c9c;border-right:1px solid #8e8e8e;border-bottom:1px solid #8e8e8e;border-radius:0 0 5px 5px;"></div>
<div class="a" style="left:215px;top:548px;width:103px;height:1px;background:#c6c9de;"></div>
<div class="t" style="left:606px;top:7px;font-size:11.6px;color:#b6b6b6;">Quick Access</div>
<div class="t" style="left:762px;top:8px;font-size:11.5px;color:#333;">Test Management</div>
<div class="t" style="left:881px;top:8px;font-size:11.3px;color:#333;">Spy</div>
<div class="t" style="left:927px;top:8px;font-size:11.5px;color:#333;">Te</div>
<div class="t" style="left:28px;top:43px;font-size:11.6px;color:#000;">Test Suites</div>
<div class="t" style="left:22px;top:74px;font-size:11.4px;color:#000;">suite_py</div>
<div class="t" style="left:18px;top:107px;font-size:11.5px;color:#000;">Test Cases</div>
<div class="t" style="left:57px;top:132px;font-size:11.5px;color:#000;">tst_general</div>
<div class="t" style="left:18px;top:418px;font-size:11.6px;color:#000;">Test Suite Resources</div>
<div class="t" style="left:18px;top:447px;font-size:11.6px;color:#000;">Scripts</div>
<div class="t" style="left:64px;top:447px;font-size:11.45px;color:#000;">Test Data</div>
<div class="t" style="left:122px;top:447px;font-size:11.3px;color:#000;">VPs</div>
<div class="t" style="left:57px;top:470px;font-size:11.55px;color:#000;">names.py</div>
<div class="t" style="left:236px;top:42px;font-size:11.7px;color:#000;">*tst_general (suite_py)</div>
<div class="t" style="left:402px;top:43px;font-size:11.85px;color:#000;">Scripted Object Map for suite_py</div>
<div class="t" style="left:221px;top:75px;font-size:14.9px;font-weight:bold;color:#3e4a60;">Object Names</div>
<div class="t" style="left:225px;top:104px;font-size:11.3px;font-weight:bold;color:#3e4a60;">Symbolic Names</div>
<div class="t" style="left:247px;top:131px;font-size:11.75px;color:#aaaaaa;">Filter object names</div>
<div class="t" style="left:244px;top:153px;font-size:11.28px;color:#000;">add_Address_NSPanel</div>
<div class="t" style="left:244px;top:168px;font-size:11.28px;color:#000;">address_Book_MyAddresses_adr_NSWindow</div>
<div class="t" style="left:260px;top:183px;font-size:11.28px;color:#000;">address_Book_MyAddresses_adr_Add_NSToolbarItem</div>
<div class="t" style="left:260px;top:198px;font-size:11.28px;color:#000;">address_Book_MyAddresses_adr_NSScroller</div>
<div class="t" style="left:260px;top:213px;font-size:11.28px;color:#000;">address_Book_MyAddresses_adr_NSTableView</div>
<div class="t" style="left:260px;top:228px;font-size:11.28px;color:#000;">address_Book_MyAddresses_adr_Remove_NSToolbarItem</div>
<div class="t" style="left:244px;top:243px;font-size:11.28px;color:#000;">address_Book_Untitled_NSWindow</div>
<div class="t" style="left:244px;top:258px;font-size:11.28px;color:#000;">file_NSMenuItem</div>
<div class="t" style="left:244px;top:273px;font-size:11.28px;color:#000;">go_o_Folder_NSWindow</div>
<div class="t" style="left:850px;top:158px;font-size:11.4px;color:#000;">New</div>
<div class="t" style="left:841px;top:185px;font-size:11.4px;color:#000;">Remove</div>
<div class="t" style="left:819px;top:212px;font-size:11.7px;color:#ababab;">Check Existence</div>
<div class="t" style="left:811px;top:239px;font-size:11.35px;color:#000;">Replace Real Name</div>
<div class="t" style="left:819px;top:266px;font-size:11.7px;color:#ababab;">Highlight Object</div>
<div class="t" style="left:220px;top:311px;font-size:11.3px;font-weight:bold;color:#4a5466;">Real Name</div>
<div class="t" style="left:224px;top:333px;font-size:11.88px;color:#000;">The properties of the Multi Property Name associated with the selected Symbolic Name. (use \\ for a literal \ in the value)</div>
<div class="t" style="left:225px;top:355px;font-size:11.5px;color:#000;">Name</div>
<div class="t" style="left:332px;top:355px;font-size:11.6px;color:#000;">Operator</div>
<div class="t" style="left:439px;top:355px;font-size:11.4px;color:#000;">Value</div>
<div class="t" style="left:226px;top:371px;font-size:11.5px;color:#000;">type</div>
<div class="t" style="left:331px;top:371px;font-size:11.4px;color:#000;">Equals</div>
<div class="t" style="left:437px;top:371px;font-size:11.5px;color:#000;">NSTableView</div>
<div class="t" style="left:226px;top:386px;font-size:11.5px;color:#000;">window</div>
<div class="t" style="left:331px;top:386px;font-size:11.5px;color:#000;">is</div>
<div class="t" style="left:438px;top:386px;font-size:11.28px;color:#000;">address_Book_MyAddresses_adr_NSWindow</div>
<div class="t" style="left:881px;top:360px;font-size:11.4px;color:#000;">New</div>
<div class="t" style="left:873px;top:387px;font-size:11.4px;color:#ababab;">Remove</div>
<div class="t" style="left:217px;top:516px;font-size:11.8px;color:#000;">Object Map</div>
</body></html>
